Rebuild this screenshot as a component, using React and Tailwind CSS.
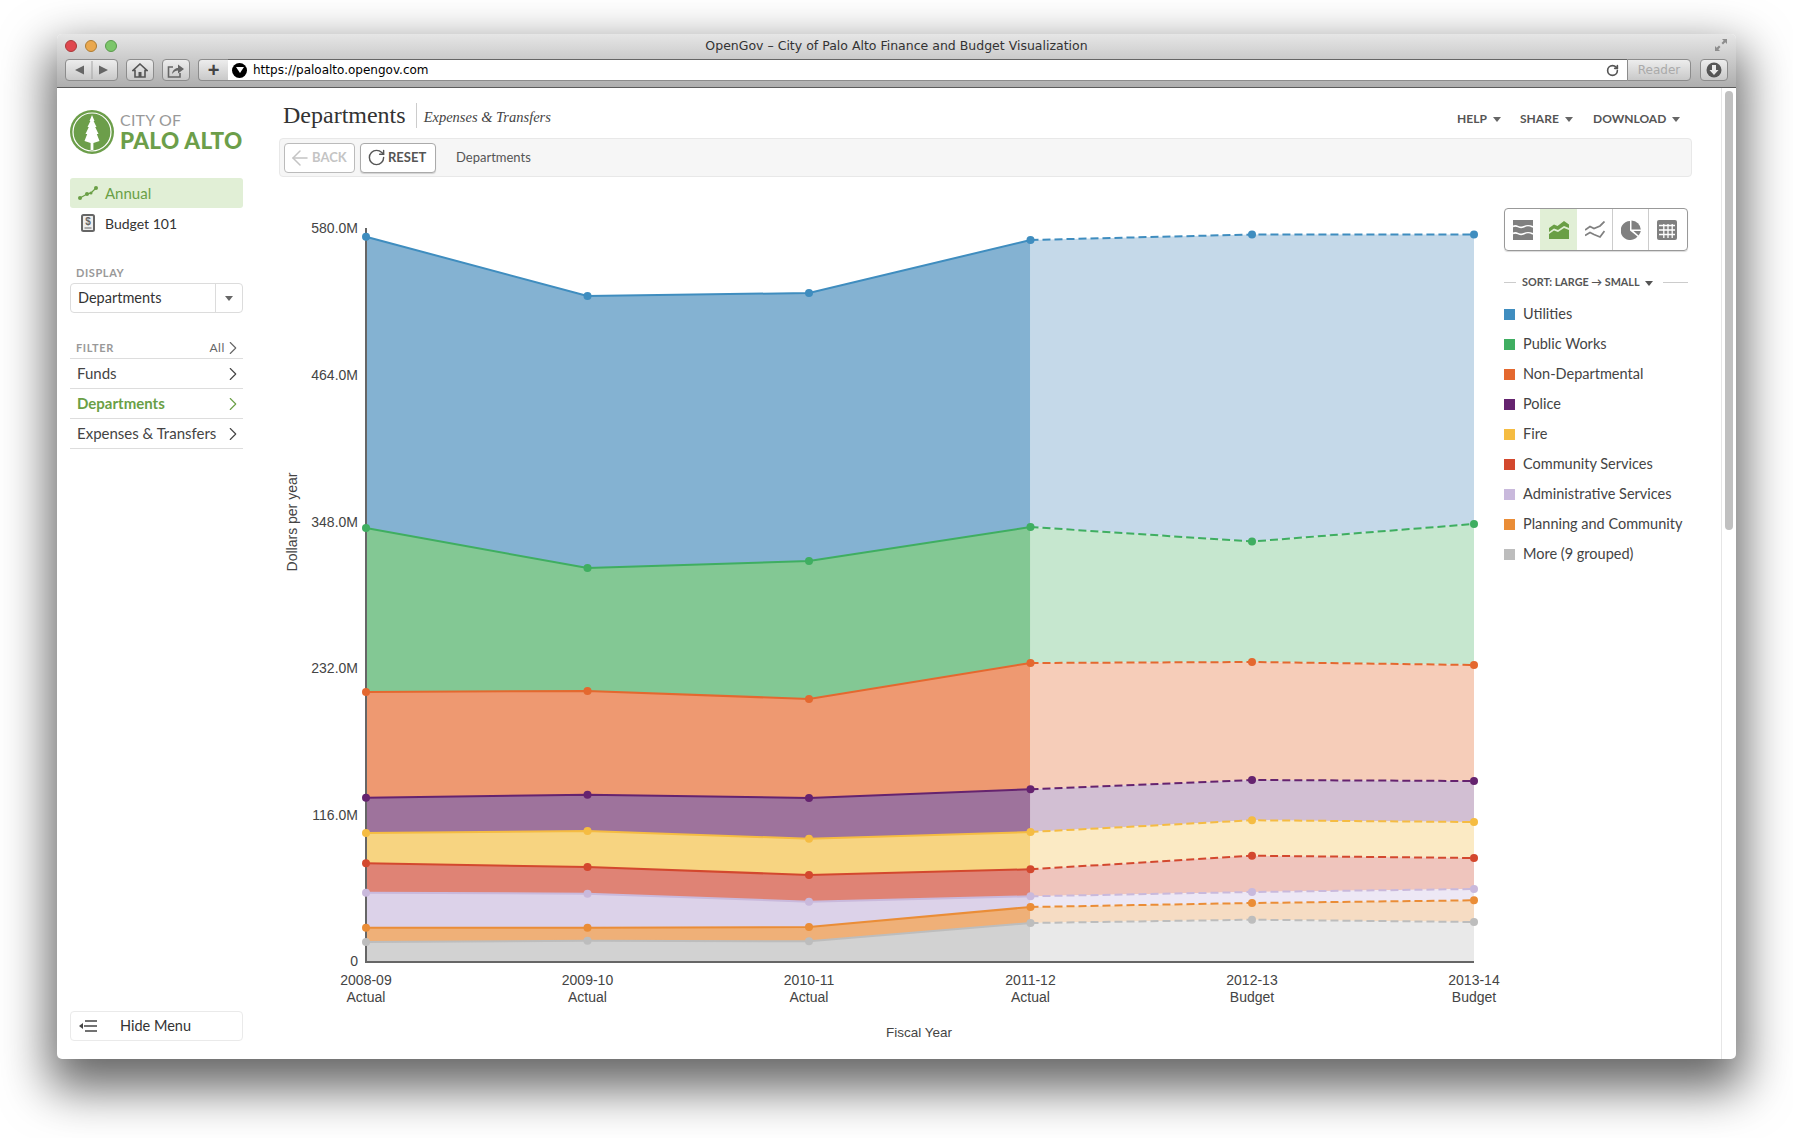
import { ArrowLeft, ChevronRight, RotateCw } from "lucide-react";

const xs = [366, 587.5, 809, 1030.5, 1252, 1474];
const baseline = 962;

const series = [
  { name: "Utilities", line: "#3f8dbf", fill: "#84b2d2", light: "#c5d9e9", ys: [236.7, 296, 293, 240, 234.5, 234.5] },
  { name: "Public Works", line: "#3fae61", fill: "#83c894", light: "#c6e7cf", ys: [528, 568, 561, 527, 541.5, 524] },
  { name: "Non-Departmental", line: "#e4682f", fill: "#ee9971", light: "#f6cdb9", ys: [692, 691, 699, 663, 662, 665] },
  { name: "Police", line: "#65236f", fill: "#9e739c", light: "#d2bfd3", ys: [797.7, 794.7, 798, 789.3, 780, 781] },
  { name: "Fire", line: "#f5bc42", fill: "#f7d481", light: "#fbeac4", ys: [833, 831, 838.7, 832, 820.3, 822] },
  { name: "Community Services", line: "#d3482e", fill: "#df8375", light: "#efc5bd", ys: [863.3, 867, 875, 869.3, 855.7, 858] },
  { name: "Administrative Services", line: "#c9b9dc", fill: "#dcd2e9", light: "#ede8f5", ys: [892.7, 893.7, 901.7, 896.3, 892, 889] },
  { name: "Planning and Community", line: "#ea8d37", fill: "#efb078", light: "#f6dcc3", ys: [927.7, 927.7, 927, 907, 903, 900.3] },
  { name: "More (9 grouped)", line: "#bdbdbd", fill: "#d2d2d2", light: "#e9e9e9", ys: [942, 940.7, 941.3, 923, 919.7, 922] },
];

const yLabels = [
  ["580.0M", 233],
  ["464.0M", 380],
  ["348.0M", 527],
  ["232.0M", 673],
  ["116.0M", 820],
  ["0", 966],
];

const xLabels = [
  ["2008-09", "Actual"],
  ["2009-10", "Actual"],
  ["2010-11", "Actual"],
  ["2011-12", "Actual"],
  ["2012-13", "Budget"],
  ["2013-14", "Budget"],
];

function band(i, from, to) {
  const top = [];
  const bottom = [];
  for (let k = from; k <= to; k++) {
    top.push(`${xs[k]},${series[i].ys[k]}`);
    const below = i + 1 < series.length ? series[i + 1].ys[k] : baseline;
    bottom.unshift(`${xs[k]},${below}`);
  }
  return [...top, ...bottom].join(" ");
}

function linePts(i, from, to) {
  const pts = [];
  for (let k = from; k <= to; k++) pts.push(`${xs[k]},${series[i].ys[k]}`);
  return pts.join(" ");
}

function Caret({ color = "border-t-[#666]" }) {
  return <span className={`inline-block w-0 h-0 border-x-[4px] border-x-transparent border-t-[5px] ${color}`}></span>;
}

function Chart() {
  return (
    <svg width="1225" height="860" viewBox="279 190 1225 860" className="shrink-0" style={{ fontFamily: "'Liberation Sans', Arial, sans-serif" }}>
      {series.map((s, i) => (
        <g key={s.name}>
          <polygon points={band(i, 0, 3)} fill={s.fill} />
          <polygon points={band(i, 3, 5)} fill={s.light} />
        </g>
      ))}
      <line x1="366" y1="228" x2="366" y2="963" stroke="#666" strokeWidth="2" />
      <line x1="365" y1="962" x2="1474" y2="962" stroke="#666" strokeWidth="2" />
      {series.map((s, i) => (
        <g key={s.name}>
          <polyline points={linePts(i, 0, 3)} fill="none" stroke={s.line} strokeWidth="2" />
          <polyline points={linePts(i, 3, 5)} fill="none" stroke={s.line} strokeWidth="2" strokeDasharray="8 4" />
          {s.ys.map((y, k) => (
            <circle key={k} cx={xs[k]} cy={y} r="4" fill={s.line} />
          ))}
        </g>
      ))}
      {yLabels.map(([t, y]) => (
        <text key={t} x="358" y={y} textAnchor="end" fontSize="14" fill="#444">{t}</text>
      ))}
      {xLabels.map(([a, b], i) => (
        <text key={a} fontSize="14" fill="#444" textAnchor="middle">
          <tspan x={xs[i]} y="985">{a}</tspan>
          <tspan x={xs[i]} y="1002">{b}</tspan>
        </text>
      ))}
      <text x="919" y="1037" textAnchor="middle" fontSize="13.5" fill="#444">Fiscal Year</text>
      <text transform="translate(297 522) rotate(-90)" textAnchor="middle" fontSize="14" fill="#444">Dollars per year</text>
    </svg>
  );
}

function Logo() {
  return (
    <svg width="44" height="44" viewBox="0 0 44 44" className="shrink-0">
      <circle cx="22" cy="22" r="22" fill="#6c9e4a" />
      <circle cx="22" cy="22" r="19" fill="none" stroke="#fff" strokeWidth="1.2" />
      <path d="M22 5 L24.5 11 L23.6 11 L26.5 17 L25.2 17 L28.5 24 L26.8 24 L29.5 31 L23.4 33 L23.4 40 L20.6 40 L20.6 33 L14.5 31 L17.2 24 L15.5 24 L18.8 17 L17.5 17 L20.4 11 L19.5 11 Z" fill="#fff" />
    </svg>
  );
}

function StackIcon() {
  return (
    <svg width="20" height="20" viewBox="0 0 20 20">
      <rect x="0" y="0" width="20" height="20" fill="#808080" />
      <path d="M0 6.5 C4 4 6 9 10 7 S16 5 20 7 M0 13.5 C4 11 6 16 10 14 S16 12 20 14" fill="none" stroke="#fff" strokeWidth="1.6" />
    </svg>
  );
}

function AreaIcon() {
  return (
    <svg width="20" height="18" viewBox="0 0 20 18">
      <path d="M0 7 L5 3.5 L8.5 5 L15 0 L20 3.5 L20 7 L15 5 L9 9 L5 7.5 L0 11 Z" fill="#6a9f46" />
      <path d="M0 13 L5 9.5 L9 11 L15 7 L20 9 L20 18 L0 18 Z" fill="#6a9f46" />
    </svg>
  );
}

function LinesIcon() {
  return (
    <svg width="20" height="18" viewBox="0 0 20 18">
      <path d="M0 9 L5 5.5 L9 7.5 L15 5 L19.5 0.5 M0 14.5 L5 11.5 L9 13.5 L15 16 L19.5 10" fill="none" stroke="#808080" strokeWidth="1.8" />
    </svg>
  );
}

function PieIcon() {
  return (
    <svg width="20" height="20" viewBox="0 0 20 20">
      <path d="M9 1 A9.5 9.5 0 1 0 16.5 16.5 L9 10.5 Z" fill="#808080" />
      <path d="M10.5 0.5 A9.5 9.5 0 0 1 19.8 9.5 L10.5 9.5 Z" fill="#808080" />
      <path d="M12.5 11 L19.8 11 A9.5 9.5 0 0 1 17.6 15.5 Z" fill="#808080" />
    </svg>
  );
}

function TableIcon() {
  return (
    <svg width="20" height="20" viewBox="0 0 20 20">
      <rect width="20" height="20" rx="2" fill="#808080" />
      <path d="M2 5.5 H18 M2 10 H18 M2 14.5 H18 M6.8 4 V18 M11 4 V18 M15.2 4 V18" stroke="#fff" strokeWidth="1.3" />
    </svg>
  );
}

function Safari() {
  const btn = "h-[22px] rounded-[4px] border border-[#8c8c8c] bg-linear-to-b from-[#ededed] to-[#c9c9c9] flex items-center justify-center";
  return (
    <div className="h-[54px] shrink-0 flex flex-col rounded-t-[5px] border-b border-[#5c5c5c] bg-linear-to-b from-[#e6e6e6] to-[#aeaeae] px-2">
      <div className="h-[25px] flex items-center relative">
        <div className="absolute left-[0px] top-[6px] flex gap-2">
          <span className="w-3 h-3 rounded-full bg-[#e0484f] border border-[#a83a3a]"></span>
          <span className="w-3 h-3 rounded-full bg-[#eaa84e] border border-[#ad7c33]"></span>
          <span className="w-3 h-3 rounded-full bg-[#7cc66a] border border-[#5a9a4c]"></span>
        </div>
        <div className="flex-1 text-center text-[12.5px] text-[#333]" style={{ fontFamily: "'DejaVu Sans', sans-serif" }}>
          OpenGov – City of Palo Alto Finance and Budget Visualization
        </div>
        <svg width="14" height="14" viewBox="0 0 14 14" className="absolute right-[0px] top-[4px]">
          <path d="M8 1 H13 V6 L11.3 4.3 L9 6.5 L7.5 5 L9.7 2.7 Z M1 8 V13 H6 L4.3 11.3 L6.5 9 L5 7.5 L2.7 9.7 Z" fill="#8d8d8d" />
        </svg>
      </div>
      <div className="flex h-[22px] gap-2">
        <div className={`${btn} w-[53px]`}>
          <svg width="51" height="20" viewBox="1 0 51 20">
            <path d="M19 5.5 V14.5 L10 10 Z M34 5.5 V14.5 L43 10 Z" fill="#666" />
            <line x1="27" y1="1" x2="27" y2="19" stroke="#a5a5a5" />
          </svg>
        </div>
        <div className={`${btn} w-[28px]`}>
          <svg width="16" height="15" viewBox="0 0 16 15">
            <path d="M8 1 L15 7.5 H13 V14 H3 V7.5 H1 Z" fill="none" stroke="#555" strokeWidth="1.6" />
            <rect x="6.5" y="9" width="3" height="5" fill="#555" />
          </svg>
        </div>
        <div className={`${btn} w-[28px]`}>
          <svg width="18" height="15" viewBox="0 0 18 15">
            <path d="M13 10 V14 H1.5 V4 H6" fill="none" stroke="#666" strokeWidth="1.6" />
            <path d="M5 11 C5.5 7.5 8 5 11 5 V1.5 L17 6 L11 10.5 V7.5 C9 7.5 7 8.5 5 11 Z" fill="#666" />
          </svg>
        </div>
        <div className="flex flex-1">
          <div className={`${btn} w-[30px] rounded-r-none border-r-0`}>
            <span className="text-[#444] text-[20px] leading-none font-bold" style={{ fontFamily: "'Liberation Sans', sans-serif" }}>+</span>
          </div>
          <div className="flex-1 flex items-center bg-white border-y border-[#8c8c8c] border-t-[#666] pl-[4px] pr-[8px]">
            <span className="w-[15px] h-[15px] rounded-full bg-black flex items-center justify-center">
              <span className="w-0 h-0 border-x-[4px] border-x-transparent border-t-[6px] border-t-white"></span>
            </span>
            <span className="ml-[6px] text-[12px] text-black" style={{ fontFamily: "'DejaVu Sans', sans-serif" }}>https://paloalto.opengov.com</span>
            <RotateCw size={13} strokeWidth={3} color="#555" className="ml-auto" />
          </div>
          <div className={`${btn} w-[64px] rounded-l-none text-[12px] text-[#aaa]`} style={{ fontFamily: "'DejaVu Sans', sans-serif" }}>
            Reader
          </div>
        </div>
        <div className={`${btn} w-[28px] ml-[1px]`}>
          <svg width="16" height="16" viewBox="0 0 16 16">
            <circle cx="8" cy="8" r="7.5" fill="#555" />
            <path d="M6 3 H10 V8 H12.5 L8 13 L3.5 8 H6 Z" fill="#e8e8e8" />
          </svg>
        </div>
      </div>
    </div>
  );
}

function Sidebar() {
  const rows = [
    { label: "Funds", cls: "text-[#444]", chev: "#444" },
    { label: "Departments", cls: "text-[#6a9f46] font-bold", chev: "#6a9f46" },
    { label: "Expenses & Transfers", cls: "text-[#444]", chev: "#444" },
  ];
  return (
    <div className="w-[222px] shrink-0 pl-[13px] pr-[36px] pt-[22px] pb-[18px] flex flex-col">
      <div className="flex items-center gap-[6px] h-[44px]">
        <Logo />
        <div className="leading-none">
          <div className="text-[16px] text-[#999] tracking-[0.2px]">CITY OF</div>
          <div className="text-[22.5px] font-black text-[#6c9e4a] mt-[2px] whitespace-nowrap tracking-[0.3px]">PALO ALTO</div>
        </div>
      </div>
      <div className="mt-[24px] h-[30px] rounded-[3px] bg-[#e1efd6] flex items-center pl-[8px] text-[15px] text-[#6a9f46]">
        <svg width="20" height="14" viewBox="0 0 20 14">
          <path d="M2 12 L9 8 L13 7 L18 2" fill="none" stroke="#6a9f46" strokeWidth="1.3" />
          <circle cx="2" cy="12" r="2" fill="#6a9f46" />
          <circle cx="9" cy="8" r="2" fill="#6a9f46" />
          <circle cx="13" cy="7" r="1.5" fill="#6a9f46" />
          <circle cx="18" cy="2" r="2" fill="#6a9f46" />
        </svg>
        <span className="ml-[7px]">Annual</span>
      </div>
      <div className="h-[30px] flex items-center pl-[11px] text-[14px] text-[#333]">
        <svg width="14" height="18" viewBox="0 0 14 18">
          <rect x="1" y="1" width="12" height="16" rx="1.5" fill="#eee" stroke="#666" strokeWidth="2" />
          <text x="7" y="11" textAnchor="middle" fontSize="10" fontWeight="700" fill="#666" fontFamily="'Liberation Sans', sans-serif">$</text>
          <line x1="3.5" y1="14" x2="10.5" y2="14" stroke="#666" />
        </svg>
        <span className="ml-[10px]">Budget 101</span>
      </div>
      <div className="mt-[28px] pl-[6px] text-[11px] font-bold tracking-[0.6px] text-[#999] leading-[14px]">DISPLAY</div>
      <div className="mt-[3px] h-[30px] rounded-[4px] border border-[#dcdcdc] flex items-center text-[14.5px] text-[#333]">
        <span className="flex-1 pl-[7px]">Departments</span>
        <span className="w-[27px] h-full border-l border-[#dcdcdc] flex items-center justify-center">
          <Caret />
        </span>
      </div>
      <div className="mt-[28px] h-[14px] pl-[6px] flex items-center justify-between text-[11px] font-bold tracking-[0.6px] text-[#999]">
        <span>FILTER</span>
        <span className="flex items-center text-[#666] font-normal text-[12px]">All<ChevronRight size={22} strokeWidth={1.2} className="-mr-[1px] -ml-[3px]" /></span>
      </div>
      <div className="mt-[3px] border-t border-[#ddd]">
        {rows.map((r) => (
          <div key={r.label} className="h-[30px] border-b border-[#ddd] flex items-center justify-between pl-[7px] text-[15px]">
            <span className={r.cls}>{r.label}</span>
            <ChevronRight size={22} strokeWidth={1.2} color={r.chev} className="-mr-[1px]" />
          </div>
        ))}
      </div>
      <div className="mt-auto h-[30px] rounded-[4px] border border-[#eaeaea] flex items-center pl-[8px] text-[14.5px] text-[#333]">
        <svg width="18" height="12" viewBox="0 0 18 12">
          <path d="M0 6 L4 3 V9 Z" fill="#444" />
          <path d="M6 1 H18 M5 6 H18 M6 11 H18" stroke="#444" strokeWidth="1.4" />
        </svg>
        <span className="ml-[23px]">Hide Menu</span>
      </div>
    </div>
  );
}

function TopNav() {
  const items = [
    { label: "HELP", w: "w-[63px]" },
    { label: "SHARE", w: "w-[73px]" },
    { label: "DOWNLOAD", w: "w-[87px]" },
  ];
  return (
    <div className="flex items-center text-[12px] font-bold text-[#555] pt-[12px]">
      {items.map((it) => (
        <div key={it.label} className={`${it.w} flex items-start gap-[6px] leading-[14px]`}>
          <span>{it.label}</span>
          <span className="-mt-[1px]"><Caret /></span>
        </div>
      ))}
    </div>
  );
}

function ChartTypes() {
  const cell = "h-full flex items-center justify-center";
  return (
    <div className="h-[43px] rounded-[4px] border border-[#999] flex shadow-[0_1px_1px_rgba(0,0,0,0.15)] overflow-hidden">
      <div className={`${cell} w-[35px]`}><StackIcon /></div>
      <div className={`${cell} w-[37px] bg-[#e1efd6]`}><AreaIcon /></div>
      <div className={`${cell} w-[36px] border-r border-[#ccc]`}><LinesIcon /></div>
      <div className={`${cell} w-[36px] border-r border-[#ccc]`}><PieIcon /></div>
      <div className={`${cell} flex-1 pr-[2px]`}><TableIcon /></div>
    </div>
  );
}

function Legend() {
  return (
    <div className="w-[184px] shrink-0 pt-[18px]">
      <ChartTypes />
      <div className="mt-[23px] h-[16px] flex items-center text-[10.8px] font-bold text-[#555]">
        <span className="w-[12px] border-t border-[#ccc]"></span>
        <span className="ml-[6px] whitespace-nowrap">SORT: LARGE → SMALL</span>
        <span className="ml-[5px]"><Caret color="border-t-[#555]" /></span>
        <span className="ml-auto w-[25px] border-t border-[#ccc]"></span>
      </div>
      <div className="mt-[9px]">
        {series.map((s) => (
          <div key={s.name} className="h-[30px] flex items-center whitespace-nowrap text-[14.5px] text-[#444]">
            <span className="w-[11px] h-[11px] shrink-0" style={{ backgroundColor: s.line }}></span>
            <span className="ml-[8px]">{s.name}</span>
          </div>
        ))}
      </div>
    </div>
  );
}

export default function App() {
  return (
    <div className="w-[1793px] h-[1138px] bg-white overflow-hidden pt-[34px] pl-[57px]" style={{ fontFamily: "Lato, 'Open Sans', sans-serif" }}>
      <div className="w-[1679px] h-[1025px] bg-white rounded-[5px] flex flex-col shadow-[0_22px_48px_8px_rgba(0,0,0,0.6)]">
        <Safari />
        <div className="flex flex-1 min-h-0">
          <Sidebar />
          <div className="flex-1 min-w-0 pr-[29px] flex flex-col">
            <div className="h-[50px] shrink-0 flex items-center justify-between pl-[4px] pr-[12px]">
              <div className="flex items-center pt-[4px]">
                <span className="text-[24px] text-[#333] leading-none" style={{ fontFamily: "'Liberation Serif', serif" }}>Departments</span>
                <span className="ml-[10px] pl-[7px] pt-[6px] border-l border-[#ccc] h-[25px] flex items-center text-[14.5px] italic text-[#444]" style={{ fontFamily: "'Liberation Serif', serif" }}>Expenses &amp; Transfers</span>
              </div>
              <TopNav />
            </div>
            <div className="h-[39px] shrink-0 rounded-[4px] border border-[#e8e8e8] bg-[#f6f6f6] flex items-center pl-[4px] text-[13px]">
              <div className="w-[71px] h-[30px] rounded-[4px] border border-[#bbb] bg-white flex items-center pl-[3px] font-bold text-[#c4c4c4]">
                <ArrowLeft size={24} strokeWidth={1.5} color="#c4c4c4" />
                BACK
              </div>
              <div className="ml-[5px] w-[76px] h-[30px] rounded-[4px] border border-[#aaa] bg-white flex items-center pl-[6px] gap-[2px] font-bold text-[#555] shadow-[0_1px_1px_rgba(0,0,0,0.15)]">
                <RotateCw size={19} strokeWidth={1.8} color="#555" />
                RESET
              </div>
              <span className="ml-[20px] text-[#555]">Departments</span>
            </div>
            <div className="flex mt-[13px]">
              <Chart />
              <Legend />
            </div>
          </div>
          <div className="w-[15px] shrink-0 border-l border-[#e6e6e6] pt-[3px] pl-[3px]">
            <div className="w-[8px] h-[439px] rounded-full bg-[#c0c0c0]"></div>
          </div>
        </div>
      </div>
    </div>
  );
}
